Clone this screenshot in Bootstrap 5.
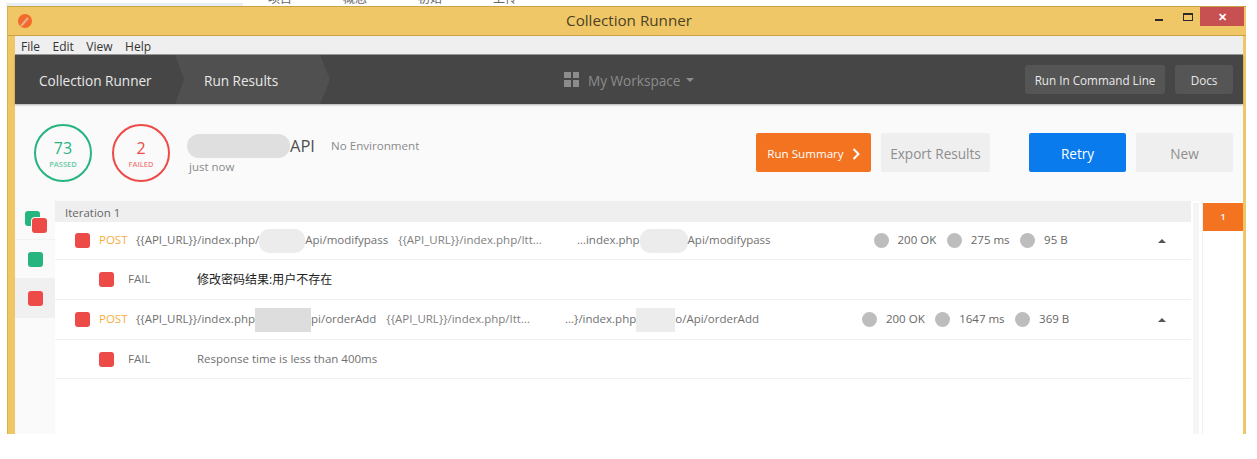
<!DOCTYPE html>
<html lang="en">
<head>
<meta charset="utf-8">
<title>Collection Runner</title>
<link href="https://cdn.jsdelivr.net/npm/bootstrap@5.3.0/dist/css/bootstrap.min.css" rel="stylesheet">
<style>
html,body{height:459px;overflow:hidden;background:#fff;}
body{font-family:"Open Sans","Noto Sans CJK SC",sans-serif;font-size:11.5px;color:#707070;line-height:1.3;}
.desk{height:6px;overflow:hidden;display:flex;color:#666;font-size:12px;line-height:12px;}
.desk-pane{width:237px;height:3px;margin:3px 25px 0 6px;background:#e8eef6;}
.desk-label{margin-top:-8px;width:75px;font-family:"Noto Sans CJK SC",sans-serif;}
.win{width:1239px;height:428px;margin-left:7px;background:#f0c766;border:1px solid #c9a244;border-bottom:0;border-left-color:#d8b04e;border-right-width:0;display:flex;flex-direction:column;}
.title-bar{height:29px;flex:none;position:relative;border-bottom:1px solid #c9a244;}
.title-text{font-size:15.2px;color:#4b4226;line-height:27px;text-align:center;padding-left:4px;}
.app-logo{position:absolute;left:10px;top:7px;}
.win-ctrl{position:absolute;right:2px;top:0;display:flex;align-items:flex-start;}
.ctl-min{width:8px;height:2px;background:#2b2b2b;margin:12px 20px 0 0;}
.ctl-max{width:10px;height:8px;border:1px solid #2b2b2b;border-top-width:2px;margin:6px 7px 0 0;}
.ctl-close{width:44px;height:19px;background:#c75050;color:#fff;font-size:11px;line-height:19px;text-align:center;font-weight:700;}
.win-body{flex:1;margin:0 3px 0 7px;background:#fff;display:flex;flex-direction:column;min-height:0;}
.menu-row{height:19px;flex:none;background:#efefef;border-bottom:1px solid #9a9a9a;color:#333;font-size:12px;line-height:21px;display:flex;gap:12.5px;padding-left:6px;font-family:"Open Sans",sans-serif;}
.top-nav{height:49px;flex:none;background:#464646;color:#fff;display:flex;align-items:center;box-shadow:0 1px 2px rgba(0,0,0,.3);position:relative;}
.crumb{height:49px;display:flex;align-items:center;font-size:13.6px;padding-top:2px;}
.crumb-one{width:160px;padding-left:24px;color:#e8e8e8;flex:none;}
.crumb-two{width:155px;flex:none;padding-left:29px;background:#505050;color:#e8e8e8;clip-path:polygon(0 0,calc(100% - 10px) 0,100% 50%,calc(100% - 10px) 100%,0 100%,9px 50%);}
.ws{margin-left:234px;display:flex;align-items:center;color:#8c8c8c;font-size:13.6px;gap:9px;padding-top:2px;}
.ws-grid{display:grid;grid-template-columns:6.5px 6.5px;gap:2px;margin-top:-2px;}
.ws-grid i{width:6.5px;height:6.5px;background:#8c8c8c;display:block;}
.ws-caret{width:0;height:0;border:4px solid transparent;border-top-color:#8c8c8c;border-bottom:0;margin-left:-4px;}
.nav-btn{height:29px;background:#555;color:#e8e8e8;border-radius:3px;font-size:11.7px;line-height:30px;text-align:center;}
.nav-btns{margin-left:auto;display:flex;gap:10px;padding-right:10px;}
.nb-cmd{width:140px;}.nb-docs{width:58px;}
.tool-row{height:97px;flex:none;background:#fafafa;display:flex;align-items:flex-start;padding:20px 10px 0 19px;}
.ring{width:58px;height:58px;border-radius:50%;border:2px solid;display:flex;flex-direction:column;align-items:center;justify-content:center;margin-right:20px;}
.ring b{font-weight:400;font-size:16px;line-height:18px;margin-top:2px;}
.ring span{font-size:7.5px;line-height:9px;margin-top:3px;font-weight:600;opacity:.7;}
.ring-pass{border-color:#26b47f;color:#26b47f;}
.ring-fail{border-color:#ed4b48;color:#ed4b48;margin-right:17px;}
.run-info{padding-top:10px;}
.run-name{display:flex;align-items:center;font-size:16.5px;color:#505050;height:24px;line-height:24px;}
.blob{display:inline-block;background:#e4e4e4;flex:none;}
.blob-name{width:103px;height:24px;border-radius:12px;background:#dfdfdf;}
.env{font-size:11.6px;color:#8a8a8a;margin-left:16px;}
.ago{font-size:11.5px;color:#8a8a8a;padding-left:2px;margin-top:2px;line-height:14px;}
.act{height:39px;border:0;border-radius:2px;font-size:13.6px;padding:2px 0 0;line-height:37px;text-align:center;margin-top:9px;}
.act-sum{width:115px;background:#f47321;color:#fff;font-size:11.6px;margin-left:auto;display:flex;align-items:center;justify-content:center;gap:8px;}
.act-exp{width:109px;background:#efefef;color:#8e8e8e;margin-left:10px;}
.act-retry{width:97px;background:#097bed;color:#fff;margin-left:39px;}
.act-new{width:97px;background:#efefef;color:#8e8e8e;margin-left:10px;}
.main{flex:1;display:flex;min-height:0;}
.side{width:40px;flex:none;padding-top:2px;background:#fafafa;}
.side-cell{display:flex;align-items:center;justify-content:center;height:38px;}
.side-top{height:37px;position:relative;border-bottom:1px solid #f2f2f2;}
.side-on{background:#f0f0f0;height:40px;}
.sq{width:15px;height:15px;border-radius:3px;display:block;flex:none;}
.sq-r{background:#ed4b48;}.sq-g{background:#26b47f;}
.sq-over{position:absolute;left:17px;top:15px;box-shadow:0 0 0 1px #fafafa;}
.sq-under{position:absolute;left:10px;top:8px;}
.results{flex:1;min-width:0;}
.iter{height:21px;background:#efefef;padding-left:10px;line-height:24px;color:#666;}
.rowx{display:flex;align-items:center;border-bottom:1px solid #f0f0f0;white-space:nowrap;}
.req{height:40px;padding-left:20px;position:relative;}
.req-first{height:38px;}
.meth{color:#f8ad3e;margin-left:9px;width:37px;}
.u2{margin-left:10px;color:#808080;}
.u3{margin-left:35px;}
.blob-u{height:24px;border-radius:10px;background:#ececec;}
.blob-a{width:46px;}
.blob-b{width:48px;}
.blob-c{width:56px;border-radius:0;background:#ddd;}
.blob-d{width:39px;border-radius:0;}
.stats{display:flex;align-items:center;margin-left:103px;color:#666;}
.dot{width:15px;height:15px;border-radius:50%;background:#bdbdbd;flex:none;margin-right:9px;}
.stat{margin-right:10.5px;}
.up{position:absolute;right:25px;top:50%;margin-top:-2px;width:0;height:0;border:4px solid transparent;border-bottom-color:#555;border-top:0;}
.tst{height:40px;padding-left:44px;}
.tst-last{height:39px;}
.tst-lab{margin-left:14px;width:69px;}
.tst-cn{color:#222;font-size:12px;}
.scr{width:11px;flex:none;padding:2px 3px 0 2px;background:#fff;}
.scr i{display:block;height:100%;background:#f5f5f5;}
.pager{width:41px;flex:none;padding-top:2px;border-left:1px solid #f0f0f0;}
.pg-on{height:28px;background:#f47321;color:#fff;font-size:9px;font-weight:600;line-height:28px;text-align:center;}
</style>
</head>
<body>
<div class="desk"><div class="desk-pane"></div><span class="desk-label">项目</span><span class="desk-label">概念</span><span class="desk-label">初始</span><span class="desk-label">上传</span></div>
<div class="win">
  <div class="title-bar">
    <svg class="app-logo" width="14" height="14" viewBox="0 0 14 14"><circle cx="7" cy="7" r="7" fill="#f26b2a"/><path d="M3 12 10 4" stroke="#e8b08c" stroke-width="2"/></svg>
    <div class="title-text">Collection Runner</div>
    <div class="win-ctrl"><div class="ctl-min"></div><div class="ctl-max"></div><div class="ctl-close">✕</div></div>
  </div>
  <div class="win-body">
    <div class="menu-row"><span>File</span><span>Edit</span><span>View</span><span>Help</span></div>
    <div class="top-nav">
      <div class="crumb crumb-one">Collection Runner</div>
      <div class="crumb crumb-two">Run Results</div>
      <div class="ws"><div class="ws-grid"><i></i><i></i><i></i><i></i></div><span>My Workspace</span><span class="ws-caret"></span></div>
      <div class="nav-btns"><div class="nav-btn nb-cmd">Run In Command Line</div><div class="nav-btn nb-docs">Docs</div></div>
    </div>
    <div class="tool-row">
      <div class="ring ring-pass"><b>73</b><span>PASSED</span></div>
      <div class="ring ring-fail"><b>2</b><span>FAILED</span></div>
      <div class="run-info">
        <div class="run-name"><span class="blob blob-name"></span><span>API</span><span class="env">No Environment</span></div>
        <div class="ago">just now</div>
      </div>
      <button class="act act-sum"><span>Run Summary</span><svg width="8" height="12" viewBox="0 0 8 12"><path d="M1.5 1 6.5 6 1.5 11" fill="none" stroke="#fff" stroke-width="2"/></svg></button>
      <button class="act act-exp">Export Results</button>
      <button class="act act-retry">Retry</button>
      <button class="act act-new">New</button>
    </div>
    <div class="main">
      <div class="side">
        <div class="side-cell side-top"><span class="sq sq-g sq-under"></span><span class="sq sq-r sq-over"></span></div>
        <div class="side-cell"><span class="sq sq-g"></span></div>
        <div class="side-cell side-on"><span class="sq sq-r"></span></div>
      </div>
      <div class="results">
        <div class="iter">Iteration 1</div>
        <div class="rowx req req-first"><span class="sq sq-r"></span><span class="meth">POST</span><span>{{API_URL}}/index.php/</span><span class="blob blob-u blob-a"></span><span>Api/modifypass</span><span class="u2">{{API_URL}}/index.php/Itt...</span><span class="u3">...index.php</span><span class="blob blob-u blob-b"></span><span>Api/modifypass</span>
          <div class="stats"><span class="dot"></span><span class="stat">200 OK</span><span class="dot"></span><span class="stat">275 ms</span><span class="dot"></span><span>95 B</span></div><span class="up"></span></div>
        <div class="rowx tst"><span class="sq sq-r"></span><span class="tst-lab">FAIL</span><span class="tst-cn">修改密码结果:用户不存在</span></div>
        <div class="rowx req"><span class="sq sq-r"></span><span class="meth">POST</span><span>{{API_URL}}/index.php</span><span class="blob blob-u blob-c"></span><span>pi/orderAdd</span><span class="u2">{{API_URL}}/index.php/Itt...</span><span class="u3">...}/index.php</span><span class="blob blob-u blob-d"></span><span>o/Api/orderAdd</span>
          <div class="stats"><span class="dot"></span><span class="stat">200 OK</span><span class="dot"></span><span class="stat">1647 ms</span><span class="dot"></span><span>369 B</span></div><span class="up"></span></div>
        <div class="rowx tst tst-last"><span class="sq sq-r"></span><span class="tst-lab">FAIL</span><span>Response time is less than 400ms</span></div>
      </div>
      <div class="scr"><i></i></div>
      <div class="pager"><div class="pg-on">1</div></div>
    </div>
  </div>
</div>
<script src="https://cdn.jsdelivr.net/npm/bootstrap@5.3.0/dist/js/bootstrap.bundle.min.js"></script>
</body>
</html>
